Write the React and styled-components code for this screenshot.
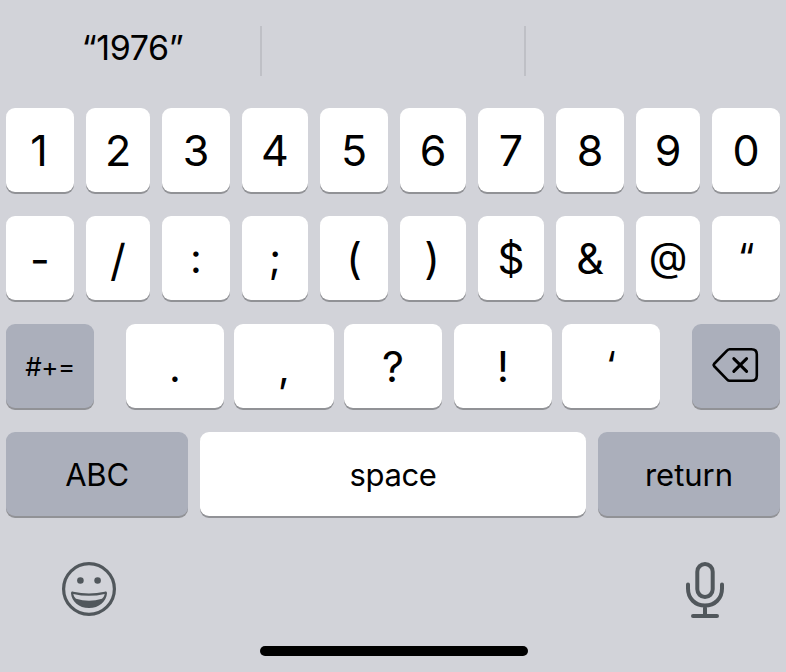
import React from 'react';
import styled, { createGlobalStyle } from 'styled-components';

const GlobalStyle = createGlobalStyle`
  * { box-sizing: border-box; }
  body { margin: 0; background: #d2d3d9; }
`;

const Keyboard = styled.main`
  width: 786px;
  height: 672px;
  display: flex;
  flex-direction: column;
  background: #d2d3d9;
  color: #000;
  font-family: Inter, 'Liberation Sans', sans-serif;
  font-weight: 370;
  overflow: hidden;
`;

const Suggestions = styled.div`
  height: 108px;
  display: grid;
  grid-template-columns: 260px 2px 262px 2px 260px;
  align-items: start;
`;

const Suggestion = styled.div`
  padding: 27px 0 0 5px;
  text-align: center;
  font-size: 34px;
  line-height: 42px;
  letter-spacing: -0.4px;
`;

const Separator = styled.div`
  height: 50px;
  margin-top: 26px;
  background: #bfc0c6;
`;

const Rows = styled.div`
  display: flex;
  flex-direction: column;
  gap: 24px;
  padding: 0 6px;
`;

const Row = styled.div`
  display: grid;
  grid-template-columns: ${(p) => p.$columns};
  column-gap: ${(p) => p.$gap ?? 12}px;
  height: 84px;
`;

const Key = styled.button`
  grid-column: ${(p) => p.$column ?? 'auto'};
  display: flex;
  align-items: center;
  justify-content: center;
  min-width: 0;
  height: 84px;
  border: 0;
  padding: ${(p) => (p.$icon ? '0 2px 2px 0' : '0')};
  border-radius: 9px;
  background: ${(p) => (p.$muted ? '#abafbb' : '#fff')};
  box-shadow: 0 2px 0 #919296;
  color: #000;
  font-family: inherit;
  font-weight: inherit;
`;

const Glyph = styled.span`
  display: block;
  font-size: ${(p) => p.$size ?? 43}px;
  line-height: 1;
  letter-spacing: ${(p) => p.$spacing ?? 0}px;
  white-space: pre;
  transform: translate(${(p) => p.$x ?? 0}px, ${(p) => p.$y ?? 0}px);
`;

const Footer = styled.div`
  display: flex;
  justify-content: space-between;
  padding: 44px 61px 0;
`;

const IconButton = styled.button`
  display: flex;
  width: ${(p) => p.$width}px;
  height: 60px;
  border: 0;
  padding: 0;
  background: none;
  color: #51575c;
`;

const HomeIndicator = styled.div`
  width: 268px;
  height: 10px;
  margin: 26px auto 0 260px;
  border-radius: 5px;
  background: #000;
`;

function DeleteIcon() {
  return (
    <svg width="48" height="36" viewBox="0 0 48 36" fill="none" stroke="currentColor" strokeWidth="2.6" strokeLinecap="round" strokeLinejoin="round">
      <path d="M18.5 2.2H40.5Q45.8 2.2 45.8 7.3V28.7Q45.8 33.8 40.5 33.8H18.7Q17.2 33.8 16.2 32.7L3 19Q2.1 18 3 17L16.2 3.3Q17.2 2.2 18.7 2.2Z" />
      <path d="M22.8 11.6 35.6 24.4M35.6 11.6 22.8 24.4" strokeWidth="3" />
    </svg>
  );
}

function SmileIcon() {
  return (
    <svg width="56" height="60" viewBox="0 0 56 60" fill="none">
      <circle cx="28" cy="29" r="25.4" stroke="currentColor" strokeWidth="3.2" />
      <circle cx="19.4" cy="20.5" r="3.3" fill="currentColor" />
      <circle cx="36.6" cy="20.5" r="3.3" fill="currentColor" />
      <path d="M10 33.2C10 31.8 11 31.3 12.3 31.8Q28 35.4 43.7 31.8C45 31.3 46 31.8 46 33.2C45.4 41.2 38 48.1 28 48.1S10.6 41.2 10 33.2Z" fill="currentColor" />
      <path d="M12.3 33.9Q28 37.6 43.7 33.9C43.4 35.7 42.3 37.5 41 38.7Q28 42.7 15 38.7C13.7 37.5 12.6 35.7 12.3 33.9Z" fill="#d2d3d9" />
    </svg>
  );
}

function MicIcon() {
  return (
    <svg width="40" height="60" viewBox="0 0 40 60" fill="none" stroke="currentColor" strokeWidth="4" strokeLinecap="round">
      <rect x="12.3" y="4" width="15.4" height="33" rx="7.7" />
      <path d="M3 24.5V28.5C3 38.5 10 45.5 20 45.5S37 38.5 37 28.5V24.5M20 45.5V55.8M8 56H32" />
    </svg>
  );
}

const digits = [
  { c: '1', x: -1 }, { c: '2' }, { c: '3' }, { c: '4' }, { c: '5' },
  { c: '6' }, { c: '7' }, { c: '8' }, { c: '9' }, { c: '0' },
];

const symbols = [
  { c: '-', y: 1 }, { c: '/', y: 2, size: 44 }, { c: ':', size: 41 },
  { c: ';', size: 41 }, { c: '(' }, { c: ')', x: -1 }, { c: '$', size: 42, y: 1 },
  { c: '&' }, { c: '@', size: 40, y: -1 }, { c: '“', size: 38, y: -1 },
];

const punctuation = [
  { c: '.', col: 3, size: 41, y: 1 }, { c: ',', col: 5, size: 41, y: 1 },
  { c: '?', col: 7 }, { c: '!', col: 9 }, { c: '‘', col: 11, size: 38, y: -1 },
];

const tenKeys = '68px 64px 68px 66px 68px 66px 66px 68px 64px 68px';

function CharKey({ item }) {
  return (
    <Key $column={item.col}>
      <Glyph $x={item.x} $y={item.y} $size={item.size}>{item.c}</Glyph>
    </Key>
  );
}

export default function App() {
  return (
    <>
      <GlobalStyle />
      <Keyboard>
        <Suggestions>
          <Suggestion>“1976”</Suggestion>
          <Separator />
          <Suggestion />
          <Separator />
          <Suggestion />
        </Suggestions>
        <Rows>
          <Row $columns={tenKeys}>
            {digits.map((d) => <CharKey key={d.c} item={d} />)}
          </Row>
          <Row $columns={tenKeys}>
            {symbols.map((s) => <CharKey key={s.c} item={s} />)}
          </Row>
          <Row $gap={0} $columns="88px 32px 98px 10px 100px 10px 98px 12px 98px 10px 98px 32px 88px">
            <Key $muted $column={1}><Glyph $size={26} $spacing={-0.5} $y={1}>#+=</Glyph></Key>
            {punctuation.map((p) => <CharKey key={p.c} item={p} />)}
            <Key $muted $icon $column={13} aria-label="Delete"><DeleteIcon /></Key>
          </Row>
          <Row $columns="182px 386px 182px">
            <Key $muted><Glyph $size={31} $spacing={-0.2}>ABC</Glyph></Key>
            <Key><Glyph $size={31} $spacing={-0.35}>space</Glyph></Key>
            <Key $muted><Glyph $size={31}>return</Glyph></Key>
          </Row>
        </Rows>
        <Footer>
          <IconButton $width={56} aria-label="Emoji"><SmileIcon /></IconButton>
          <IconButton $width={40} aria-label="Dictation"><MicIcon /></IconButton>
        </Footer>
        <HomeIndicator />
      </Keyboard>
    </>
  );
}
